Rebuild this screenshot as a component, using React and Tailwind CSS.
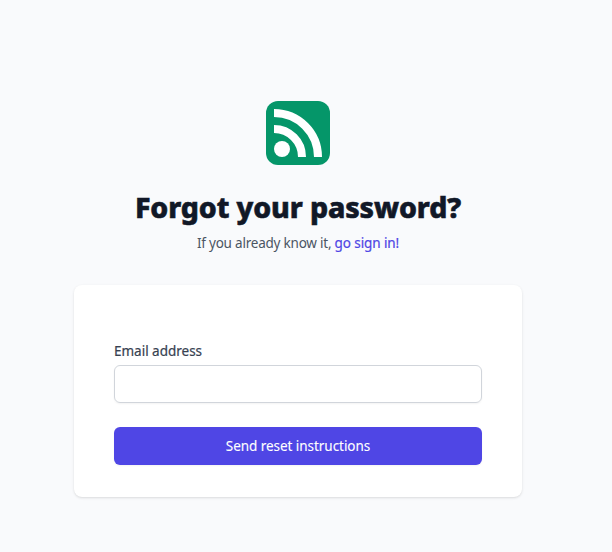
function Logo() {
  return (
    <svg className="h-16 w-16" viewBox="0 0 64 64" aria-hidden="true">
      <rect width="64" height="64" rx="12" fill="#059669" />
      <circle cx="16" cy="48" r="8" fill="#fff" />
      <path d="M8 28a28 28 0 0 1 28 28M8 12a44 44 0 0 1 44 44" fill="none" stroke="#fff" strokeWidth="8" />
    </svg>
  );
}

export default function App() {
  return (
    <div className="flex h-[552px] w-full flex-col items-center overflow-hidden bg-[#f9fafc] pt-[101px] pr-4 font-['Noto_Sans',sans-serif]">
      <Logo />
      <h1 className="mt-6 whitespace-nowrap text-[28.5px] leading-9 font-extrabold tracking-[-0.12px] text-[#111827] [-webkit-text-stroke:0.6px_#111827]">
        Forgot your password?
      </h1>
      <p className="mt-2 whitespace-nowrap text-[13.5px] leading-5 tracking-[-0.22px] text-[#4b5563]">
        If you already know it,{" "}
        <a href="#" className="tracking-[-0.1px] text-[#4f46e5] [-webkit-text-stroke:0.2px_#4f46e5]">go sign in!</a>
      </p>
      <form className="mt-8 flex h-[212px] w-[448px] shrink-0 flex-col rounded-lg bg-white px-10 pt-14 pb-8 shadow">
        <label htmlFor="email" className="text-[13.5px] leading-5 tracking-[-0.01px] text-[#374151] [-webkit-text-stroke:0.2px_#374151]">
          Email address
        </label>
        <input
          id="email"
          type="email"
          className="mt-1 h-[38px] w-full rounded-md border border-[#d1d5db] px-3 shadow-xs outline-none"
        />
        <button
          type="button"
          className="mt-6 h-[38px] w-full rounded-md bg-[#4f46e5] text-[13.5px] leading-5 tracking-[-0.05px] text-white shadow-xs [-webkit-text-stroke:0.1px_white]"
        >
          Send reset instructions
        </button>
      </form>
    </div>
  );
}
